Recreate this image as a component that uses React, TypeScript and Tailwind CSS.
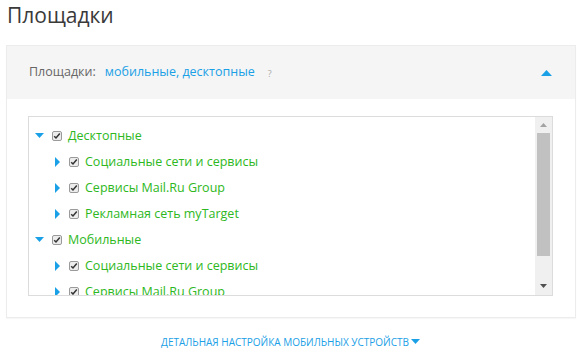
import React from 'react';

type Node = { label: string; level: number; open?: boolean };

const rows: Node[] = [
  { label: 'Десктопные', level: 0, open: true },
  { label: 'Социальные сети и сервисы', level: 1 },
  { label: 'Сервисы Mail.Ru Group', level: 1 },
  { label: 'Рекламная сеть myTarget', level: 1 },
  { label: 'Мобильные', level: 0, open: true },
  { label: 'Социальные сети и сервисы', level: 1 },
  { label: 'Сервисы Mail.Ru Group', level: 1 },
];

const Check: React.FC = () => (
  <span className="w-[10px] h-[10px] border border-[#9a9a9a] rounded-[2px] bg-[#ececec] flex items-center justify-center shrink-0">
    <svg width="8" height="8" viewBox="0 0 8 8">
      <path d="M1.2 4.2 L3 6 L6.8 1.6" stroke="#333" strokeWidth="1.5" fill="none" />
    </svg>
  </span>
);

const Caret: React.FC<{ open?: boolean }> = ({ open }) =>
  open ? (
    <svg width="9" height="6" viewBox="0 0 9 6" className="shrink-0">
      <path d="M0 0 H9 L4.5 5 Z" fill="#1aa0e6" />
    </svg>
  ) : (
    <svg width="5" height="10" viewBox="0 0 5 10" className="shrink-0">
      <path d="M0 0 L5 5 L0 10 Z" fill="#1aa0e6" />
    </svg>
  );

export default function App() {
  return (
    <div className="w-[581px] h-[354px] bg-white px-[6px] font-['Open_Sans',sans-serif] overflow-hidden">
      <h1 className="text-[21px] leading-[28px] pt-[1px] pl-[1px] text-[#3a3a3a] font-normal">Площадки</h1>

      <div className="mt-[16px] w-[570px] border border-[#ececec] shadow-[0_1px_1px_rgba(0,0,0,0.03)]">
        {/* header */}
        <div className="h-[53px] bg-[#f5f5f5] flex items-center pl-[22px] pr-[23px] text-[12.5px]">
          <span className="text-[#666]">Площадки:</span>
          <span className="ml-[9px] text-[#1aa0e6]">мобильные, десктопные</span>
          <span className="ml-[13px] mt-[3px] text-[9px] text-[#aaa]">?</span>
          <svg width="11" height="6" viewBox="0 0 11 6" className="ml-auto">
            <path d="M0 6 L5.5 0 L11 6 Z" fill="#1aa0e6" />
          </svg>
        </div>

        {/* tree */}
        <div className="pt-[17px] pl-[21px] pr-[22px] pb-[21px]">
          <div className="h-[180px] border border-[#dcdcdc] flex">
            <div className="flex-1 overflow-hidden pt-[6px]">
              {rows.map((r, i) => (
                <div
                  key={i}
                  className={
                    'h-[26px] flex items-center text-[12.5px] text-[#2db822] ' +
                    (r.level === 0 ? 'pl-[6px]' : 'pl-[26px]')
                  }
                >
                  {r.level === 0 ? (
                    <>
                      <Caret open />
                      <span className="ml-[8px]"><Check /></span>
                      <span className="ml-[6px]">{r.label}</span>
                    </>
                  ) : (
                    <>
                      <Caret />
                      <span className="ml-[9px]"><Check /></span>
                      <span className="ml-[6px]">{r.label}</span>
                    </>
                  )}
                </div>
              ))}
            </div>
            <div className="w-[17px] bg-[#f0f0f0] flex flex-col items-center">
              <svg width="7" height="4" viewBox="0 0 7 4" className="mt-[6px]">
                <path d="M0 4 L3.5 0 L7 4 Z" fill="#a3a3a3" />
              </svg>
              <div className="mt-[6px] w-[13px] h-[123px] bg-[#c1c1c1]" />
              <svg width="7" height="4" viewBox="0 0 7 4" className="mt-auto mb-[7px]">
                <path d="M0 0 L7 0 L3.5 4 Z" fill="#505050" />
              </svg>
            </div>
          </div>
        </div>
      </div>

      <div className="mt-[17px] flex items-center justify-center text-[10px] text-[#1aa0e6]">
        <span>ДЕТАЛЬНАЯ НАСТРОЙКА МОБИЛЬНЫХ УСТРОЙСТВ</span>
        <svg width="9" height="6" viewBox="0 0 9 6" className="ml-[2px] -mt-[2px]">
          <path d="M0 0 H9 L4.5 5 Z" fill="#1aa0e6" />
        </svg>
      </div>
    </div>
  );
}
